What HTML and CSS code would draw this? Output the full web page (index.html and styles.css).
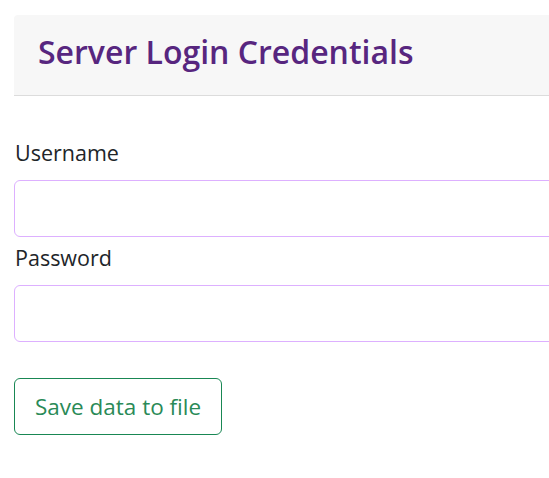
FILE: index.html
```html
<!DOCTYPE html>
<html>
<head>
<meta charset="utf-8">
<link rel="stylesheet" href="styles.css">
</head>
<body>
<div class="page">
  <div class="header">
    <h1 class="title">Server Login Credentials</h1>
  </div>
  <form class="form">
    <label class="label" for="u">Username</label>
    <input class="input" id="u" type="text">
    <label class="label label-2" for="p">Password</label>
    <input class="input" id="p" type="password">
    <button class="btn" type="button">Save data to file</button>
  </form>
</div>
</body>
</html>
```
FILE: styles.css
```css
html, body {
  margin: 0;
  padding: 0;
  overflow: hidden;
  background: #fff;
}
body {
  font-family: "Open Sans", "Noto Sans", sans-serif;
  color: #212529;
}
.page {
  padding: 15px 0 0 14px;
  width: 560px;
}
.header {
  background: #f7f7f7;
  height: 81px;
  border-bottom: 1px solid #dcdcdc;
  border-top-left-radius: 4px;
  display: flex;
  align-items: center;
  padding-left: 24px;
  padding-bottom: 5px;
  box-sizing: border-box;
}
.title {
  margin: 0;
  font-size: 32px;
  font-weight: 600;
  color: #57267f;
  line-height: 1.2;
}
.form {
  display: flex;
  flex-direction: column;
  align-items: flex-start;
  padding-top: 40px;
}
.label {
  font-size: 21.5px;
  line-height: 33px;
  margin-bottom: 11px;
  padding-left: 1px;
}
.label-2 {
  margin-top: 4px;
}
.input {
  box-sizing: border-box;
  width: 100%;
  height: 57px;
  border: 1px solid #ddb0ff;
  border-radius: 6px;
  background: #fff;
  margin: 0;
}
.btn {
  margin-top: 36px;
  box-sizing: border-box;
  height: 57px;
  padding: 0 20px;
  font-family: inherit;
  font-size: 22.5px;
  color: #2a8a57;
  background: #fff;
  border: 1px solid #198754;
  border-radius: 6px;
}
```
